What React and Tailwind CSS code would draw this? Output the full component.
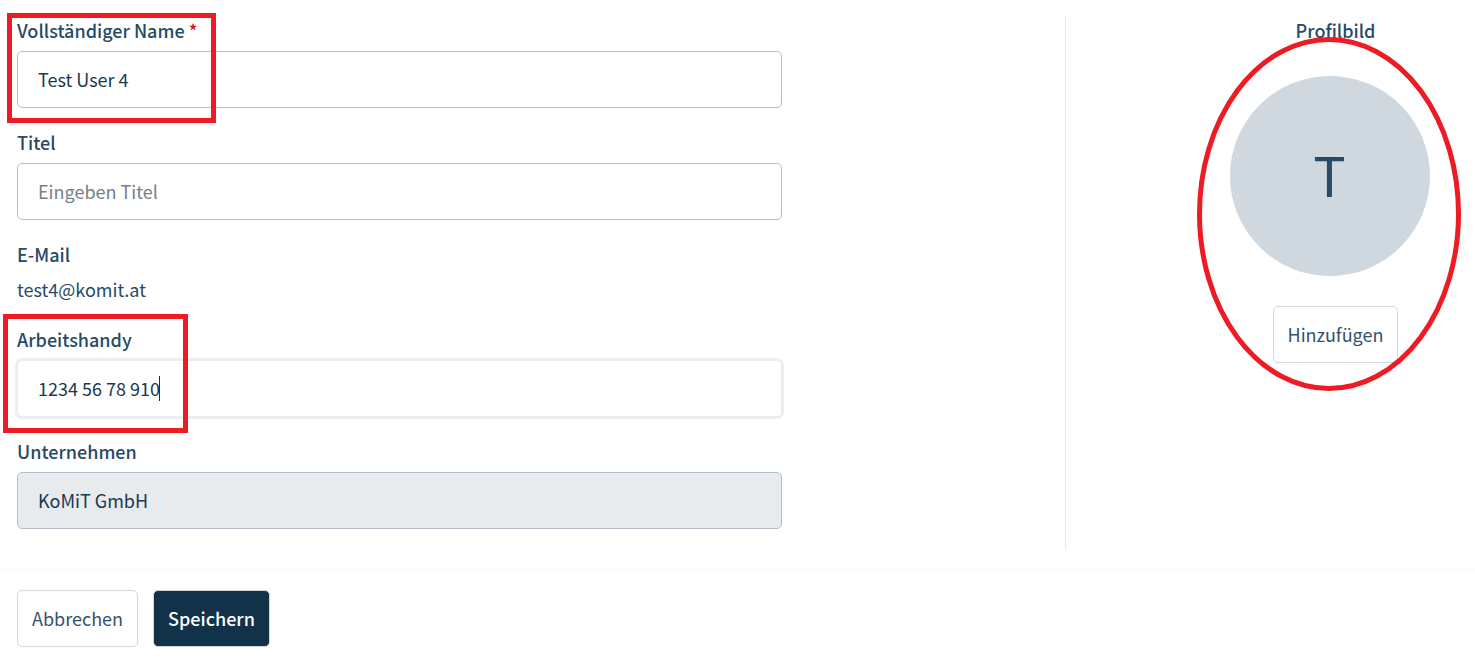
import React from "react";

const inputClass =
  "block w-full h-[57px] rounded-[5px] border border-[#b4bfc9] bg-white px-5 pb-0.5 text-[#1b3850] placeholder:text-[#76808b] placeholder:opacity-100 outline-none";

const buttonClass =
  "h-[57px] rounded-[5px] border border-[#cfd7df] px-[14px] text-[#33536d] cursor-pointer";

const Field = ({ id, label, required, children }) => (
  <div className="relative">
    <label htmlFor={id} className="block mb-[10px] leading-[22px] font-medium">
      {label}
      {required && <span className="text-[#c9151e]"> *</span>}
    </label>
    {children}
  </div>
);

const App = () => {
  return (
    <form
      className="bg-white text-[18px] text-[#274a66] font-['Noto_Sans_CJK_SC','Source_Sans_Pro',sans-serif]"
      onSubmit={(e) => e.preventDefault()}
    >
      <div className="flex pt-4 pb-[19px]">
        {/* Profile data */}
        <div className="flex-1 border-r border-[#e9ecef] pl-[17px] pt-[3px] pb-[21px]">
          <div className="flex flex-col gap-[23px] w-[73%]">
            <Field id="name" label="Vollständiger Name" required>
              <input
                id="name"
                type="text"
                defaultValue="Test User 4"
                className={inputClass}
              />
              <div className="absolute -left-[10px] -top-[6px] w-[209px] h-[110px] border-5 border-[#ed1c24] pointer-events-none" />
            </Field>

            <Field id="title" label="Titel">
              <input
                id="title"
                type="text"
                placeholder="Eingeben Titel"
                className={inputClass}
              />
            </Field>

            <div className="pb-0.5">
              <p className="mb-[10px] leading-[22px] font-medium">E-Mail</p>
              <p className="leading-7">test4@komit.at</p>
            </div>

            <Field id="phone" label="Arbeitshandy">
              <div className="relative">
                <input
                  id="phone"
                  type="tel"
                  defaultValue="1234 56 78 910"
                  className="block w-full h-[57px] rounded-[5px] border border-[#ebeef3] ring-2 ring-[#ebeef3] bg-white px-5 pb-0.5 text-[#1b3850] outline-none"
                />
                {/* Text cursor */}
                <span className="absolute left-[142px] top-4 w-px h-[25px] bg-[#12324a] pointer-events-none" />
              </div>
              <div className="absolute -left-[14px] -top-[14px] w-[185px] h-[119px] border-5 border-[#ed1c24] pointer-events-none" />
            </Field>

            <Field id="company" label="Unternehmen">
              <input
                id="company"
                type="text"
                readOnly
                value="KoMiT GmbH"
                className="block w-full h-[57px] rounded-[5px] border border-[#b4bfc9] bg-[#e8ebee] px-5 pb-0.5 text-[#1b3850] outline-none"
              />
            </Field>
          </div>
        </div>

        {/* Profile picture */}
        <div className="w-[409px] pl-[130px] pt-[3px]">
          <div className="relative flex flex-col items-center">
            <p className="leading-[22px] font-medium">Profilbild</p>
            <div className="mt-[35px] mr-3 pb-1 size-[200px] rounded-full bg-[#cfd7df] flex items-center justify-center text-[54px] leading-none">
              T
            </div>
            <button type="button" className={`${buttonClass} mt-[30px]`}>
              Hinzufügen
            </button>
            <svg
              className="absolute left-px top-[18px] pointer-events-none"
              width="264"
              height="354"
              viewBox="0 0 264 354"
              fill="none"
            >
              <ellipse
                cx="132"
                cy="177"
                rx="129.5"
                ry="174.5"
                stroke="#ed1c24"
                strokeWidth="5"
              />
            </svg>
          </div>
        </div>
      </div>

      {/* Actions */}
      <div className="flex gap-[15px] border-t border-[#f8f9fa] px-[17px] py-5">
        <button type="button" className={buttonClass}>
          Abbrechen
        </button>
        <button
          type="submit"
          className="h-[57px] rounded-[5px] border border-[#cfd7df] bg-[#12324a] px-[14px] font-medium text-white cursor-pointer"
        >
          Speichern
        </button>
      </div>
    </form>
  );
};

export default App;
